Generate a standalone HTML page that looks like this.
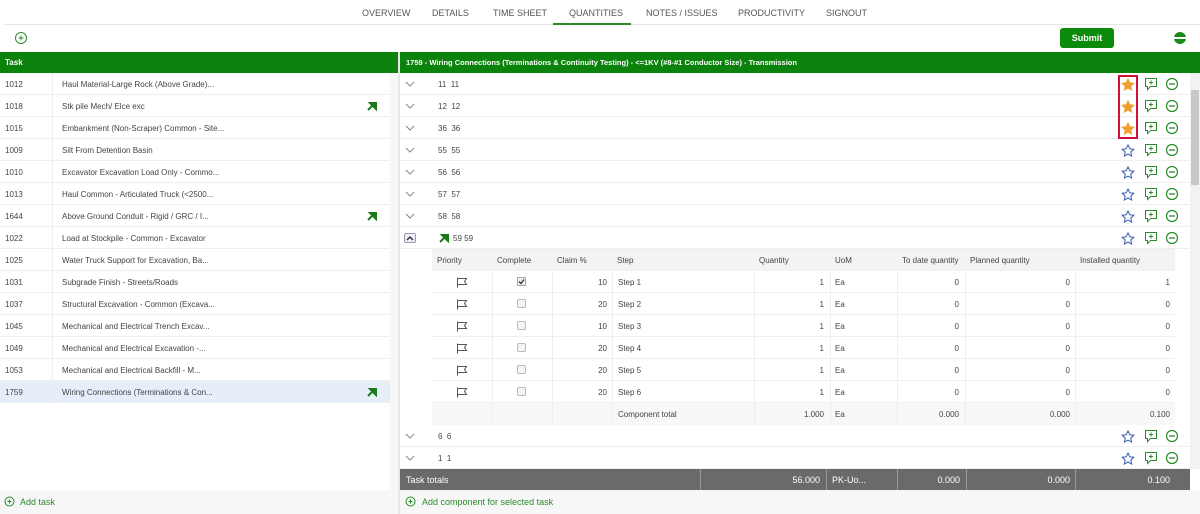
<!DOCTYPE html>
<html><head><style>
*{box-sizing:border-box;margin:0;padding:0}
body{width:1200px;height:514px;overflow:hidden;font-family:"Liberation Sans",sans-serif;font-size:8px;color:#444;background:#fff;position:relative}
.a{position:absolute}
.nav span{position:absolute;top:8px;font-size:9px;color:#555}
.row{position:absolute;height:22px;border-bottom:1px solid #eee;display:flex;align-items:center}
.ic{position:absolute}
</style></head><body>
<div class="nav">
<span style="left:362px">OVERVIEW</span><span style="left:432px">DETAILS</span><span style="left:493px">TIME SHEET</span><span style="left:569px">QUANTITIES</span><span style="left:646px">NOTES / ISSUES</span><span style="left:738px">PRODUCTIVITY</span><span style="left:826px">SIGNOUT</span>
</div>
<div class="a" style="left:5px;top:24px;width:1195px;height:1px;background:#e4e4e4"></div>
<div class="a" style="left:553px;top:23px;width:78px;height:2px;background:#2a8a2a"></div>
<svg class="a" style="left:14px;top:31px" width="14" height="14"><circle cx="7" cy="7" r="5.5" fill="none" stroke="#2a8a2a" stroke-width="1"/><path d="M7 4.5v5M4.5 7h5" stroke="#2a8a2a" stroke-width="1"/></svg>
<div class="a" style="left:1060px;top:28px;width:54px;height:20px;background:#0b8a0b;border-radius:3px;color:#fff;font-weight:bold;font-size:9px;text-align:center;line-height:20px">Submit</div>
<svg class="a" style="left:1173px;top:31px" width="14" height="14"><circle cx="7" cy="7" r="6" fill="#1a8a1a"/><rect x="1" y="6" width="12" height="2" fill="#fff"/></svg>
<div class="a" style="left:0;top:52px;width:1200px;height:21px;background:#0b820b"></div>
<div class="a" style="left:398px;top:52px;width:2px;height:462px;background:#e8e8e8"></div>
<div class="a" style="left:5px;top:58px;color:#fff;font-weight:bold;font-size:8px">Task</div>
<div class="a" style="left:406px;top:58px;color:#fff;font-weight:bold;font-size:7.5px">1759 - Wiring Connections (Terminations &amp; Continuity Testing) - &lt;=1KV (#8-#1 Conductor Size) - Transmission</div>
<div id="left"></div>
<div class="a" style="left:390px;top:73px;width:8px;height:417px;background:#f7f7f7"></div>
<div class="a" style="left:0;top:490px;width:398px;height:24px;background:#f7f7f7"></div>
<svg class="a" style="left:4px;top:496px" width="11" height="11"><circle cx="5.5" cy="5.5" r="4.5" fill="none" stroke="#2a8a2a"/><path d="M5.5 3.5v4M3.5 5.5h4" stroke="#2a8a2a"/></svg>
<div class="a" style="left:20px;top:497px;color:#2a8a2a;font-size:9px">Add task</div>
<div id="right"></div>
<div class="a" style="left:1118px;top:75px;width:20px;height:64px;border:2px solid #d0103a"></div>
<div class="a" style="left:1190px;top:73px;width:10px;height:396px;background:#f2f2f2"></div>
<div class="a" style="left:1191px;top:90px;width:8px;height:95px;background:#c8c8c8"></div>
<div class="a" style="left:400px;top:469px;width:790px;height:21px;background:#6a6a6a;color:#fff;font-size:9px">
<span class="a" style="left:6px;top:6px">Task totals</span>
<span class="a" style="left:300px;top:0;width:1px;height:21px;background:#999"></span>
<span class="a" style="left:370px;top:6px;width:50px;text-align:right">56.000</span>
<span class="a" style="left:426px;top:0;width:1px;height:21px;background:#999"></span>
<span class="a" style="left:432px;top:6px">PK-Uo...</span>
<span class="a" style="left:497px;top:0;width:1px;height:21px;background:#999"></span>
<span class="a" style="left:510px;top:6px;width:50px;text-align:right">0.000</span>
<span class="a" style="left:566px;top:0;width:1px;height:21px;background:#999"></span>
<span class="a" style="left:620px;top:6px;width:50px;text-align:right">0.000</span>
<span class="a" style="left:675px;top:0;width:1px;height:21px;background:#999"></span>
<span class="a" style="left:720px;top:6px;width:50px;text-align:right">0.100</span>
</div>
<div class="a" style="left:400px;top:490px;width:800px;height:24px;background:#f7f7f7"></div>
<svg class="a" style="left:405px;top:496px" width="11" height="11"><circle cx="5.5" cy="5.5" r="4.5" fill="none" stroke="#2a8a2a"/><path d="M5.5 3.5v4M3.5 5.5h4" stroke="#2a8a2a"/></svg>
<div class="a" style="left:422px;top:497px;color:#2a8a2a;font-size:9px">Add component for selected task</div>
<script>
const L=[["1012","Haul Material-Large Rock (Above Grade)..."],["1018","Stk pile Mech/ Elce exc",1],["1015","Embankment (Non-Scraper) Common - Site..."],["1009","Silt From Detention Basin"],["1010","Excavator Excavation Load Only - Commo..."],["1013","Haul Common - Articulated Truck (<2500..."],["1644","Above Ground Conduit - Rigid / GRC / I...",1],["1022","Load at Stockpile - Common - Excavator"],["1025","Water Truck Support for Excavation, Ba..."],["1031","Subgrade Finish - Streets/Roads"],["1037","Structural Excavation - Common (Excava..."],["1045","Mechanical and Electrical Trench Excav..."],["1049","Mechanical and Electrical Excavation -..."],["1053","Mechanical and Electrical Backfill - M..."],["1759","Wiring Connections (Terminations & Con...",1]];
const arrow=(x,y)=>`<svg class="ic" style="left:${x}px;top:${y}px" width="10" height="10"><path d="M1 9L7 3M3 2h6v6z" stroke="#1a7a1a" stroke-width="2" fill="#1a7a1a"/></svg>`;
let h="";
L.forEach((r,i)=>{const y=73+i*22;h+=`<div class="row" style="left:0;top:${y}px;width:390px;${i==14?'background:#e6eefa':''}"><span class="a" style="left:5px;top:7px">${r[0]}</span><span class="a" style="left:52px;top:0;width:0;height:22px;border-left:1px solid #eee"></span><span class="a" style="left:62px;top:7px">${r[1].replace('<','&lt;')}</span></div>`;if(r[2])h+=arrow(367,y+6);});
document.getElementById('left').innerHTML=h;
const star=(x,y,f)=>`<svg class="ic" style="left:${x}px;top:${y}px" width="14" height="14"><path d="M7 1l1.8 3.8 4 .5-3 2.8.8 4L7 10.1 3.4 12.1l.8-4-3-2.8 4-.5z" fill="${f?'#f0a030':'none'}" stroke="${f?'#f0a030':'#3a5ab0'}" stroke-width="1"/></svg>`;
const icons=(y,f)=>star(1121,y+5,f)+`<svg class="ic" style="left:1144px;top:${y+4}px" width="14" height="14"><path d="M1.5 1.5h11v8h-6l-3 3v-3h-2z" fill="none" stroke="#2a8a2a"/><path d="M7 3.5v4M5 5.5h4" stroke="#2a8a2a"/></svg><svg class="ic" style="left:1165px;top:${y+4}px" width="14" height="14"><circle cx="7" cy="7" r="5.5" fill="none" stroke="#2a8a2a" stroke-width="1.2"/><path d="M4 7h6" stroke="#2a8a2a" stroke-width="1.3"/></svg>`;
const chev=(y)=>`<svg class="ic" style="left:405px;top:${y+8}px" width="10" height="7"><path d="M1 1l4 4 4-4" fill="none" stroke="#888"/></svg>`;
const R=[["11  11",73,1],["12  12",95,1],["36  36",117,1],["55  55",139],["56  56",161],["57  57",183],["58  58",205],["6  6",425],["1  1",447]];
h="";
R.forEach(r=>{h+=`<div class="row" style="left:400px;top:${r[1]}px;width:790px"></div>`+chev(r[1])+`<span class="a" style="left:438px;top:${r[1]+7}px;white-space:pre">${r[0]}</span>`+icons(r[1],r[2]);});
h+=`<div class="row" style="left:400px;top:227px;width:790px"></div><div class="a" style="left:404px;top:233px;width:12px;height:10px;border:1px solid #99a;border-radius:2px;background:#eef"></div><svg class="ic" style="left:406px;top:235px" width="8" height="6"><path d="M1 5l3-3 3 3" fill="none" stroke="#222" stroke-width="1.3"/></svg>`+arrow(439,233)+`<span class="a" style="left:453px;top:234px">59  59</span>`+icons(227,0);
const cols=[432,492,552,612,754,830,897,965,1075,1175];
const hd=["Priority","Complete","Claim %","Step","Quantity","UoM","To date quantity","Planned quantity","Installed quantity"];
h+=`<div class="a" style="left:432px;top:249px;width:743px;height:22px;background:#f3f3f3"></div>`;
hd.forEach((t,i)=>h+=`<span class="a" style="left:${cols[i]+5}px;top:256px">${t}</span>`);
const cl=[10,20,10,20,20,20];
for(let k=0;k<7;k++){const y=271+k*22;h+=`<div class="a" style="left:432px;top:${y+21}px;width:743px;height:1px;background:#eee"></div>`;
 if(k<6){h+=`<svg class="ic" style="left:456px;top:${y+6}px" width="12" height="11"><path d="M1.5 0.5v10M1.5 1.5h9l-2 3 2 3h-9" fill="none" stroke="#555"/></svg>`;
 h+= k==0?`<svg class="ic" style="left:517px;top:${y+6}px" width="9" height="9"><rect x=".5" y=".5" width="8" height="8" fill="#eee" stroke="#aaa"/><path d="M2 4.5l2 2 3-4" fill="none" stroke="#333" stroke-width="1.3"/></svg>`:`<div class="a" style="left:517px;top:${y+6}px;width:9px;height:9px;border:1px solid #bbb;border-radius:2px;background:#f4f4f4"></div>`;
 h+=`<span class="a" style="left:${cols[2]}px;width:55px;text-align:right;top:${y+7}px">${cl[k]}</span><span class="a" style="left:618px;top:${y+7}px">Step ${k+1}</span><span class="a" style="left:754px;width:70px;text-align:right;top:${y+7}px">1</span><span class="a" style="left:835px;top:${y+7}px">Ea</span><span class="a" style="left:897px;width:62px;text-align:right;top:${y+7}px">0</span><span class="a" style="left:965px;width:105px;text-align:right;top:${y+7}px">0</span><span class="a" style="left:1075px;width:95px;text-align:right;top:${y+7}px">${k==0?1:0}</span>`;}
 else{h+=`<div class="a" style="left:432px;top:${y}px;width:743px;height:22px;background:#f8f8f8"></div><span class="a" style="left:618px;top:${y+7}px">Component total</span><span class="a" style="left:754px;width:70px;text-align:right;top:${y+7}px">1.000</span><span class="a" style="left:835px;top:${y+7}px">Ea</span><span class="a" style="left:897px;width:62px;text-align:right;top:${y+7}px">0.000</span><span class="a" style="left:965px;width:105px;text-align:right;top:${y+7}px">0.000</span><span class="a" style="left:1075px;width:95px;text-align:right;top:${y+7}px">0.100</span>`;}
}
cols.slice(1,9).forEach(x=>h+=`<div class="a" style="left:${x}px;top:271px;width:1px;height:154px;background:#eee"></div>`);
document.getElementById('right').innerHTML=h;
</script>
</body></html>
